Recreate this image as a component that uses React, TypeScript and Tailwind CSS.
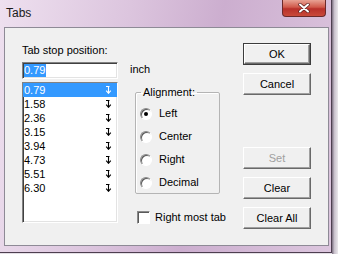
import React from 'react';

const stops = ['0.79', '1.58', '2.36', '3.15', '3.94', '4.73', '5.51', '6.30'];
const aligns = ['Left', 'Center', 'Right', 'Decimal'];

// little tab-stop marker shown at the right of each row
const TabMark = ({ light }: { light?: boolean }) => (
  <svg width="7" height="8" viewBox="0 0 7 8" className="shrink-0">
    <path
      d="M1 0.5H4.5M3.5 0.5V7.5M1.2 4.6L3.5 7.3L5.8 4.6"
      stroke={light ? '#fff' : '#000'}
      strokeWidth="1.1"
      fill="none"
    />
  </svg>
);

const Btn = ({ label, isDefault, disabled }: { label: string; isDefault?: boolean; disabled?: boolean }) => (
  <div
    className={
      isDefault
        ? 'w-[68px] h-[22px] border border-[#3c3c3c] bg-[#f0f0f0] flex'
        : 'w-[68px] h-[22px] flex'
    }
  >
    <div
      className={`flex-1 flex items-center justify-center bg-[#f0f0f0] border border-t-white border-l-white border-b-[#696969] border-r-[#696969] shadow-[inset_-1px_-1px_0_#a0a0a0] leading-[13px] ${
        disabled ? 'text-[#a0a0a0]' : 'text-black'
      }`}
    >
      {label}
    </div>
  </div>
);

const Radio = ({ checked }: { checked?: boolean }) => (
  <div className="w-[12px] h-[12px] rounded-full border border-t-[#8a8a8a] border-l-[#8a8a8a] border-b-white border-r-white bg-white flex items-center justify-center shadow-[inset_1px_1px_0_#5a5a5a]">
    {checked && <div className="w-[4px] h-[4px] rounded-full bg-black" />}
  </div>
);

export default function App() {
  return (
    <div
      className="w-[338px] h-[254px] overflow-hidden flex bg-[#e4dfe6] text-[11px] text-black"
      style={{ fontFamily: '"Liberation Sans", Arial, sans-serif' }}
    >
      {/* WINDOW */}
      <div className="w-[332px] h-[253px] shrink-0 flex flex-col border-r border-b border-[#4e3f50] bg-[linear-gradient(100deg,#eee0ef_0%,#dcc5de_35%,#ccaecf_60%,#dcc6de_100%)]">
        {/* TITLE BAR */}
        <div className="h-[27px] flex items-start justify-between">
          <span className="pl-[6px] pt-[6px] text-[12px] leading-[14px] text-[#1a1a1a]">Tabs</span>
          <div className="mr-[5px] w-[44px] h-[17px] rounded-b-[4px] border border-t-0 border-[#6b2a2a] bg-[linear-gradient(180deg,#e8a294_0%,#d0594a_45%,#b8302a_55%,#c94a3a_100%)] flex items-center justify-center">
            <svg width="12" height="10" viewBox="0 0 12 10">
              <path d="M2 1.5L10 8.5M10 1.5L2 8.5" stroke="#5a2020" strokeWidth="3.4" strokeLinecap="round" />
              <path d="M2 1.5L10 8.5M10 1.5L2 8.5" stroke="#fff" strokeWidth="2" strokeLinecap="round" />
            </svg>
          </div>
        </div>

        {/* CLIENT AREA */}
        <div className="ml-[4px] w-[325px] h-[219px] border border-[#8e8a96] bg-[#f0f0f0] flex items-start pt-[15px]">
          {/* LEFT */}
          <div className="ml-[17px] w-[96px] pt-[1px] flex flex-col">
            <span className="leading-[13px]">Tab stop position:</span>
            <div className="mt-[5px] h-[17px] bg-white border border-t-[#828282] border-l-[#828282] border-b-white border-r-white shadow-[inset_1px_1px_0_#404040,inset_-1px_-1px_0_#e3e3e3] flex items-center pl-[1px]">
              <span className="bg-[#3399ff] text-white leading-[13px] pr-[1px]">0.79</span>
            </div>
            <div className="mt-[3px] h-[141px] bg-white border border-t-[#828282] border-l-[#828282] border-b-white border-r-white shadow-[inset_1px_1px_0_#404040,inset_-1px_-1px_0_#e3e3e3] flex flex-col">
              {stops.map((s, i) => (
                <div
                  key={s}
                  className={`h-[14px] flex items-center pl-[1px] ${i === 0 ? 'bg-[#3399ff] text-white' : ''}`}
                >
                  <span className="w-[81px] leading-[13px]">{s}</span>
                  <TabMark light={i === 0} />
                </div>
              ))}
            </div>
          </div>

          {/* MIDDLE */}
          <div className="ml-[12px] w-[90px] pt-[1px] flex flex-col">
            <span className="mt-[19px] leading-[13px]">inch</span>
            <fieldset className="mt-[10px] ml-[5px] w-[85px] h-[108px] border border-[#b4b4b4] rounded-[2px] shadow-[inset_1px_1px_0_#fff]">
              <legend className="ml-[5px] px-[2px] leading-[13px]">Alignment:</legend>
              <div className="mt-[3px] flex flex-col">
                {aligns.map((a, i) => (
                  <div key={a} className="h-[23px] flex items-center pl-[4px]">
                    <Radio checked={i === 0} />
                    <span className="ml-[7px] leading-[13px]">{a}</span>
                  </div>
                ))}
              </div>
            </fieldset>
            <div className="mt-[17px] ml-[7px] h-[13px] flex items-center whitespace-nowrap">
              <div className="w-[13px] h-[13px] shrink-0 bg-white border border-t-[#8a8a8a] border-l-[#8a8a8a] border-b-white border-r-white shadow-[inset_1px_1px_0_#5a5a5a]" />
              <span className="ml-[5px] leading-[13px]">Right most tab</span>
            </div>
          </div>

          {/* RIGHT BUTTONS */}
          <div className="ml-[23px] flex flex-col">
            <Btn label="OK" isDefault />
            <div className="mt-[8px]">
              <Btn label="Cancel" />
            </div>
            <div className="mt-[52px]">
              <Btn label="Set" disabled />
            </div>
            <div className="mt-[8px]">
              <Btn label="Clear" />
            </div>
            <div className="mt-[8px]">
              <Btn label="Clear All" />
            </div>
          </div>
        </div>
      </div>

      {/* BEHIND THE WINDOW */}
      <div className="flex-1 bg-[linear-gradient(90deg,#7b6f80_0%,#c9c1cc_40%,#ebe8ec_100%)]" />
    </div>
  );
}
